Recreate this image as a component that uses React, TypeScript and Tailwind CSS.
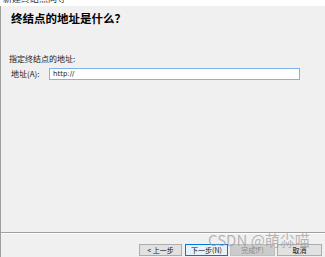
const cjk = { fontFamily: '"Microsoft YaHei", "Noto Sans CJK SC", "Liberation Sans", sans-serif' };

function WizButton({
  label,
  variant = 'normal',
  className = '',
}: {
  label: string;
  variant?: 'normal' | 'default' | 'disabled';
  className?: string;
}) {
  const styles =
    variant === 'default'
      ? 'border-[#0078d7] bg-[#e5f1fb] text-[#111]'
      : variant === 'disabled'
        ? 'border-[#bfbfbf] bg-[#cccccc] text-[#8a8a8a]'
        : 'border-[#adadad] bg-[#e1e1e1] text-[#111]';
  return (
    <div
      className={`flex h-[12px] items-center justify-center border text-[7px] leading-none ${styles} ${className}`}
    >
      {label}
    </div>
  );
}

export default function App() {
  return (
    <div
      className="relative flex h-[257px] w-[325px] flex-col overflow-hidden bg-[#f0f0f0] text-[#1a1a1a]"
      style={cjk}
    >
      {/* clipped header strip */}
      <div className="h-[6px] overflow-hidden bg-white">
        <div className="-mt-[6px] pl-[3px] text-[9px] leading-[10px] text-[#333]">新建终结点向导</div>
      </div>

      <div className="flex flex-1 flex-col border-l border-[#a0a0a0]">
        <h1 className="mt-[5px] pl-[10px] text-[11.5px] font-bold leading-[14px] text-black">
          终结点的地址是什么？
        </h1>

        <div className="mt-[29px] pl-[8px] text-[8px] leading-[10px]">指定终结点的地址:</div>

        <div className="mt-[4px] flex items-center pl-[10px]">
          <span className="w-[38px] text-[8px] leading-[10px]">地址(A):</span>
          <div className="flex h-[12px] w-[251px] items-center border border-[#7eb4ea] bg-white pl-[3px] text-[7px] leading-none" style={{ fontFamily: '"DejaVu Sans", sans-serif' }}>
            http://
          </div>
        </div>

        <div className="flex-1" />

        <div className="border-t border-[#a0a0a0]" />
        <div className="border-t border-white" />

        <div className="flex h-[23px] items-end justify-end pb-[1px] pr-[3px]">
          <WizButton label="< 上一步" className="w-[43px]" />
          <WizButton label="下一步(N)" variant="default" className="ml-[3px] w-[43px]" />
          <WizButton label="完成(F)" variant="disabled" className="ml-[2px] w-[45px]" />
          <WizButton label="取消" className="ml-[2px] w-[45px]" />
        </div>
      </div>

      {/* watermark */}
      <div className="pointer-events-none absolute left-[208px] top-[231px] text-[15px] leading-[18px] text-[#9a9a9a]/70">
        CSDN @萌尛喵
      </div>
    </div>
  );
}
